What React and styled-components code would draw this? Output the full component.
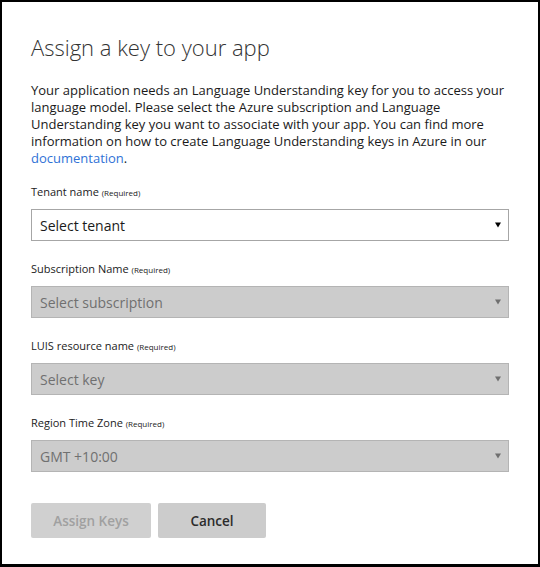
import React from "react";
import styled, { createGlobalStyle } from "styled-components";

const GlobalStyle = createGlobalStyle`
  html, body {
    margin: 0;
    padding: 0;
    background: #fff;
  }
  body {
    font-family: "Open Sans", "Noto Sans", "Liberation Sans", sans-serif;
    color: #1e1e1e;
  }
  * {
    box-sizing: border-box;
  }
`;

const fields = [
  { label: "Tenant name", value: "Select tenant", disabled: false },
  { label: "Subscription Name", value: "Select subscription", disabled: true },
  { label: "LUIS resource name", value: "Select key", disabled: true },
  { label: "Region Time Zone", value: "GMT +10:00", disabled: true },
];

function Caret({ disabled }) {
  return (
    <CaretIcon width="6" height="6" viewBox="0 0 6 6" aria-hidden="true">
      <polygon points="0,0.5 6,0.5 3,5.5" fill={disabled ? "#6f6f6f" : "#000"} />
    </CaretIcon>
  );
}

export default function App() {
  return (
    <>
      <GlobalStyle />
      <Dialog>
        <Title>Assign a key to your app</Title>
        <Intro>
          Your application needs an Language Understanding key for you to access your
          language model. Please select the Azure subscription and Language
          Understanding key you want to associate with your app. You can find more
          information on how to create Language Understanding keys in Azure in our{" "}
          <DocLink href="#">documentation</DocLink>.
        </Intro>

        <Form>
          {fields.map((f) => (
            <Field key={f.label}>
              <Label>
                {f.label} <Required>(Required)</Required>
              </Label>
              <SelectBox $disabled={f.disabled}>
                <span>{f.value}</span>
                <Caret disabled={f.disabled} />
              </SelectBox>
            </Field>
          ))}
        </Form>

        <Actions>
          <Button $width={120} disabled>
            Assign Keys
          </Button>
          <Button $width={108}>Cancel</Button>
        </Actions>
      </Dialog>
    </>
  );
}

const Dialog = styled.div`
  width: 540px;
  height: 567px;
  border: 2px solid #000;
  border-bottom-width: 3px;
  background: #fff;
  padding: 30px 29px 0 29px;
  display: flex;
  flex-direction: column;
`;

const Title = styled.h1`
  margin: 0;
  font-weight: 300;
  font-size: 22px;
  line-height: 30px;
  color: #333;
`;

const Intro = styled.p`
  margin: 20px 0 0 0;
  font-size: 13px;
  line-height: 17px;
  color: #1a1a1a;
`;

const DocLink = styled.a`
  color: #2f72d6;
  text-decoration: none;
`;

const Form = styled.div`
  margin-top: 17px;
  display: flex;
  flex-direction: column;
  gap: 20px;
`;

const Field = styled.div`
  display: flex;
  flex-direction: column;
  gap: 8px;
`;

const Label = styled.label`
  font-size: 11px;
  line-height: 16px;
  color: #222;
`;

const Required = styled.span`
  font-size: 8px;
`;

const SelectBox = styled.div`
  height: 32px;
  display: flex;
  align-items: center;
  justify-content: space-between;
  padding: 0 7px 0 8px;
  font-size: 14px;
  border: 1px solid ${(p) => (p.$disabled ? "#b4b4b4" : "#a6a6a6")};
  background: ${(p) => (p.$disabled ? "#cccccc" : "#fff")};
  color: ${(p) => (p.$disabled ? "#707070" : "#1a1a1a")};
`;

const CaretIcon = styled.svg`
  flex: none;
  display: block;
`;

const Actions = styled.div`
  margin-top: 31px;
  display: flex;
  gap: 7px;
`;

const Button = styled.button`
  width: ${(p) => p.$width}px;
  height: 35px;
  border: none;
  border-radius: 2px;
  background: #cccccc;
  font-family: inherit;
  font-size: 13.5px;
  font-weight: 600;
  color: #2b2b2b;
  cursor: pointer;

  &:disabled {
    background: #d0d0d0;
    color: #a0a0a0;
    cursor: default;
  }
`;
